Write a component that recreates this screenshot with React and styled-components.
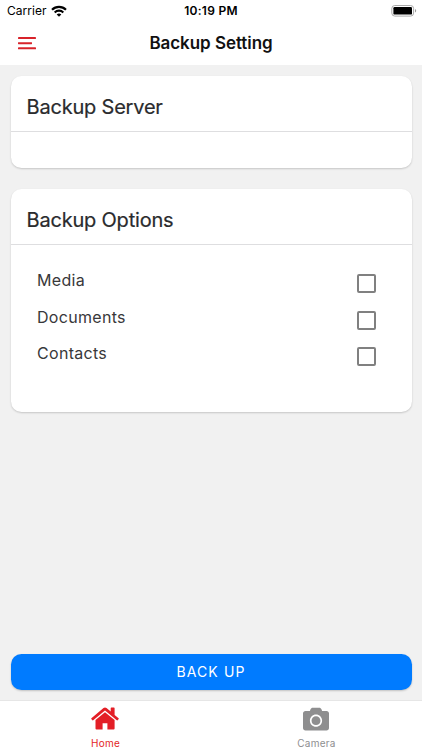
import React, { useState } from 'react'
import styled, { createGlobalStyle } from 'styled-components'
import { FaCamera } from 'react-icons/fa'

const GlobalStyle = createGlobalStyle`
* {
  box-sizing: border-box;
}
body {
  margin: 0;
  font-family: Inter, "Liberation Sans", sans-serif;
  background: #f1f1f1;
}
`
const Screen = styled.div`
display: flex;
flex-direction: column;
width: 422px;
height: 750px;
overflow: hidden;
background: #f1f1f1;
`
const StatusBar = styled.div`
display: grid;
grid-template-columns: 1fr auto 1fr;
align-items: center;
height: 22px;
padding: 0 5px 0 7px;
background: #fff;
color: #000;
font-size: 12px;
line-height: 22px;
`
const Carrier = styled.div`
display: flex;
align-items: center;
gap: 4px;
letter-spacing: 0.05px;
`
const Clock = styled.div`
margin-left: -2px;
font-weight: 600;
letter-spacing: 0.25px;
`
const BatteryBox = styled.div`
display: flex;
justify-content: flex-end;
`
const Header = styled.header`
display: grid;
grid-template-columns: 60px 1fr 60px;
align-items: center;
height: 43px;
background: #fff;
`
const MenuButton = styled.button`
display: flex;
align-items: center;
height: 43px;
padding: 0 0 0 18px;
border: 0;
background: none;
`
const Title = styled.h1`
margin: 0;
text-align: center;
color: #111;
font-size: 17px;
font-weight: 600;
line-height: 43px;
letter-spacing: -0.05px;
`
const Content = styled.main`
display: flex;
flex-direction: column;
flex: 1;
gap: 21px;
padding: 11px 10.5px 10px;
`
const Card = styled.section`
height: ${({ $height }) => $height}px;
border-radius: 10.5px;
background: #fff;
box-shadow: 0 1px 2px rgba(0, 0, 0, 0.18);
`
const CardTitle = styled.h2`
height: 56px;
margin: 0;
padding: 4px 16px 0;
border-bottom: 1px solid #dedee0;
color: #2a2b2d;
font-size: 20px;
font-weight: 400;
line-height: 55px;
letter-spacing: -0.2px;
-webkit-text-stroke: 0.2px #2a2b2d;
`
const Options = styled.div`
padding: 20px 36px 0 26.5px;
`
const Option = styled.label`
display: flex;
justify-content: space-between;
height: 36.6px;
color: #38383a;
font-size: 16px;
line-height: 30px;
letter-spacing: 0.3px;
`
const Checkbox = styled.input`
appearance: none;
width: 19px;
height: 19px;
margin: 9px 0 0;
border: 2px solid #808080;
border-radius: 2px;
background: #fff;
&:checked {
  background: #808080;
}
`
const BackupButton = styled.button`
height: 36px;
margin-top: auto;
padding: 0;
border: 0;
border-radius: 10.5px;
background: #007bff;
box-shadow: 0 1px 2px rgba(0, 0, 0, 0.2);
color: #fff;
font-family: inherit;
font-size: 14px;
line-height: 36px;
letter-spacing: 1.1px;
`
const TabBar = styled.nav`
display: grid;
grid-template-columns: 1fr 1fr;
height: 50px;
border-top: 1px solid #e6e6e6;
background: #fff;
`
const Tab = styled.button`
display: flex;
flex-direction: column;
align-items: center;
padding: 4px 0 0;
border: 0;
background: none;
color: ${({ $active }) => ($active ? '#e31e26' : '#8e8e8f')};
font-family: inherit;
font-size: 10px;
line-height: 14px;
letter-spacing: 0.25px;
`
const TabIcon = styled.span`
display: flex;
align-items: center;
justify-content: center;
height: 27px;
margin: 0 1px 4px 0;
`

const WifiIcon = () => (
  <svg width="16" height="12" viewBox="0 0 16 12" fill="none" stroke="#000">
    <path d="M1 4.7C4.9 .8 11.1 .8 15 4.7" strokeWidth="2.2" />
    <path d="M3.7 7.4C6.1 5 9.9 5 12.3 7.4" strokeWidth="2.1" />
    <path d="M8 11.7L5.7 9.4C7 8.2 9 8.2 10.3 9.4Z" fill="#000" stroke="none" />
  </svg>
)

const BatteryIcon = () => (
  <svg width="26" height="12" viewBox="0 0 26 12">
    <rect x=".8" y=".5" width="21.8" height="10.6" rx="3" fill="#fff" stroke="#aaa" />
    <rect x="2.4" y="2" width="18.6" height="7.6" rx="1.2" fill="#000" />
    <path d="M24 4.1C25.6 4.6 25.6 7 24 7.5Z" fill="#999" />
  </svg>
)

const MenuIcon = () => (
  <svg width="18" height="13" viewBox="0 0 18 13" fill="#d8232a">
    <rect y="0" width="18" height="2" rx=".4" />
    <rect y="5.2" width="14" height="2" rx=".4" />
    <rect y="10.3" width="18" height="2" rx=".4" />
  </svg>
)

const HomeIcon = () => (
  <svg width="28" height="23" viewBox="0 0 28 23" fill="currentColor">
    <path d="M14 5.2L23.6 13.1V21.6Q23.6 22.6 22.6 22.6H16.4V16.2H11.6V22.6H5.5Q4.5 22.6 4.5 21.6V13.1Z" />
    <path d="M.4 11.3L12.5 1.1Q14 0 15.5 1.1L19.7 4.6V1.2Q19.7 .5 20.4 .5H22.9Q23.6 .5 23.6 1.2V7.9L27.6 11.3Q28 11.7 27.7 12.1L26.6 13.3Q26.2 13.6 25.8 13.3L14 3.6L2.2 13.3Q1.8 13.6 1.4 13.3L.3 12.1Q0 11.7 .4 11.3Z" />
  </svg>
)

const OPTIONS = ['Media', 'Documents', 'Contacts']

export default function App() {
  const [selected, setSelected] = useState([])
  const [tab, setTab] = useState('home')

  const toggle = (name) => {
    setSelected(selected.includes(name)
      ? selected.filter(item => item !== name)
      : [...selected, name])
  }

  return (
    <>
      <GlobalStyle />
      <Screen>
        <StatusBar>
          <Carrier>Carrier <WifiIcon /></Carrier>
          <Clock>10:19 PM</Clock>
          <BatteryBox><BatteryIcon /></BatteryBox>
        </StatusBar>
        <Header>
          <MenuButton aria-label="Menu"><MenuIcon /></MenuButton>
          <Title>Backup Setting</Title>
        </Header>
        <Content>
          <Card $height={92}>
            <CardTitle>Backup Server</CardTitle>
          </Card>
          <Card $height={222.5}>
            <CardTitle>Backup Options</CardTitle>
            <Options>
              {OPTIONS.map(name => (
                <Option key={name}>
                  {name}
                  <Checkbox
                    type="checkbox"
                    checked={selected.includes(name)}
                    onChange={() => toggle(name)}
                  />
                </Option>
              ))}
            </Options>
          </Card>
          <BackupButton>BACK UP</BackupButton>
        </Content>
        <TabBar>
          <Tab $active={tab === 'home'} onClick={() => setTab('home')}>
            <TabIcon><HomeIcon /></TabIcon>
            Home
          </Tab>
          <Tab $active={tab === 'camera'} onClick={() => setTab('camera')}>
            <TabIcon><FaCamera size={26} /></TabIcon>
            Camera
          </Tab>
        </TabBar>
      </Screen>
    </>
  )
}
